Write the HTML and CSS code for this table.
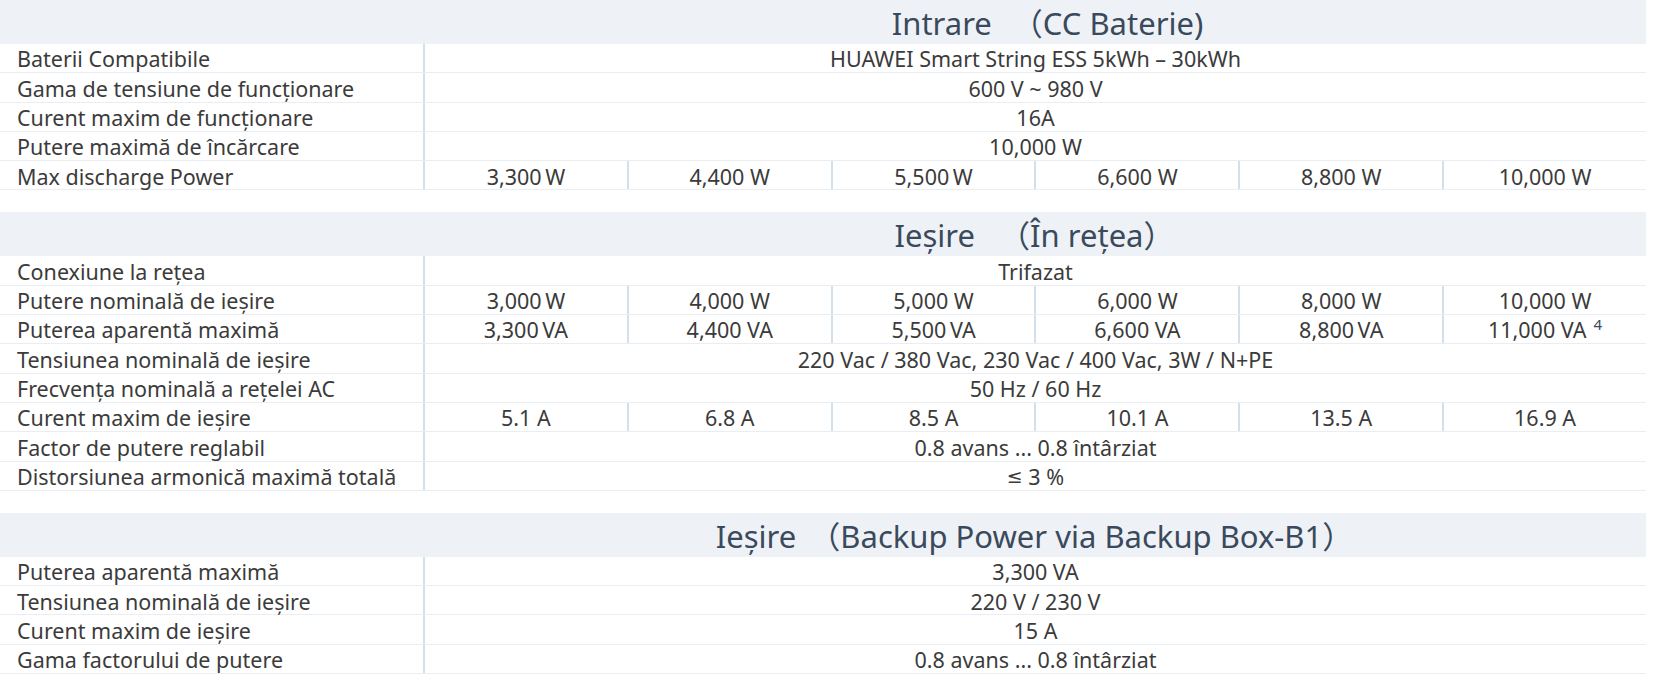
FILE: index.html
```html
<!DOCTYPE html>
<html lang="ro">
<head>
<meta charset="utf-8">
<title>Specificații</title>
<link rel="stylesheet" href="styles.css">
</head>
<body>
<div class="spec">
  <section class="group">
    <div class="head"><div></div><h2 class="title t1">Intrare<span class="cjk open o1">（</span>CC Baterie)</h2></div>
    <div class="row"><div class="lbl">Baterii Compatibile</div><div class="val all">HUAWEI Smart String ESS 5kWh – 30kWh</div></div>
    <div class="row"><div class="lbl">Gama de tensiune de funcționare</div><div class="val all">600 V ~ 980 V</div></div>
    <div class="row"><div class="lbl">Curent maxim de funcționare</div><div class="val all">16A</div></div>
    <div class="row"><div class="lbl">Putere maximă de încărcare</div><div class="val all">10,000 W</div></div>
    <div class="row"><div class="lbl">Max discharge Power</div><div class="val">3,300&#8201;W</div><div class="val">4,400 W</div><div class="val">5,500&#8201;W</div><div class="val">6,600 W</div><div class="val">8,800 W</div><div class="val">10,000 W</div></div>
  </section>
  <div class="gap"></div>
  <section class="group">
    <div class="head"><div></div><h2 class="title">Ieșire <span class="cjk open o2">（</span>În rețea<span class="cjk">）</span></h2></div>
    <div class="row"><div class="lbl">Conexiune la rețea</div><div class="val all">Trifazat</div></div>
    <div class="row"><div class="lbl">Putere nominală de ieșire</div><div class="val">3,000&#8201;W</div><div class="val">4,000 W</div><div class="val">5,000 W</div><div class="val">6,000 W</div><div class="val">8,000 W</div><div class="val">10,000 W</div></div>
    <div class="row"><div class="lbl">Puterea aparentă maximă</div><div class="val">3,300&#8201;VA</div><div class="val">4,400 VA</div><div class="val">5,500&#8201;VA</div><div class="val">6,600 VA</div><div class="val">8,800&#8201;VA</div><div class="val">11,000 VA <sup class="note">4</sup></div></div>
    <div class="row"><div class="lbl">Tensiunea nominală de ieșire</div><div class="val all">220 Vac / 380 Vac, 230 Vac / 400 Vac, 3W / N+PE</div></div>
    <div class="row"><div class="lbl">Frecvența nominală a rețelei AC</div><div class="val all">50 Hz / 60 Hz</div></div>
    <div class="row"><div class="lbl">Curent maxim de ieșire</div><div class="val">5.1 A</div><div class="val">6.8 A</div><div class="val">8.5 A</div><div class="val">10.1 A</div><div class="val">13.5 A</div><div class="val">16.9 A</div></div>
    <div class="row"><div class="lbl">Factor de putere reglabil</div><div class="val all">0.8 avans ... 0.8 întârziat</div></div>
    <div class="row"><div class="lbl">Distorsiunea armonică maximă totală</div><div class="val all"><span class="sym">≤</span>&nbsp;3 %</div></div>
  </section>
  <div class="gap"></div>
  <section class="group">
    <div class="head"><div></div><h2 class="title">Ieșire <span class="cjk open o3">（</span>Backup Power via Backup Box-B1<span class="cjk">）</span></h2></div>
    <div class="row"><div class="lbl">Puterea aparentă maximă</div><div class="val all">3,300 VA</div></div>
    <div class="row"><div class="lbl">Tensiunea nominală de ieșire</div><div class="val all">220 V / 230 V</div></div>
    <div class="row"><div class="lbl">Curent maxim de ieșire</div><div class="val all">15 A</div></div>
    <div class="row"><div class="lbl">Gama factorului de putere</div><div class="val all">0.8 avans ... 0.8 întârziat</div></div>
  </section>
  <div class="gap end"></div>
</div>
</body>
</html>
```

FILE: styles.css
```css
html, body {
  margin: 0;
  padding: 0;
  background: #ffffff;
}

.spec {
  width: 1646px;
  font-family: "Noto Sans", "Noto Sans CJK SC", sans-serif;
  color: #3b3b3b;
  font-size: 21.5px;
}

.head,
.row {
  display: grid;
  grid-template-columns: 423px repeat(6, 1fr);
}

.head {
  height: 44px;
  background: #eef2f7;
  align-items: center;
}

.title {
  grid-column: 2 / span 6;
  margin: 0;
  text-align: center;
  font-weight: 400;
  font-size: 31px;
  line-height: 44px;
  color: #3a4a5c;
  white-space: nowrap;
}

.title.t1 {
  padding-left: 26px;
}

.cjk {
  font-family: "Noto Sans CJK SC", sans-serif;
}

.open.o1 {
  margin-left: 20px;
}

.open.o2 {
  margin-left: 16px;
}

.open.o3 {
  margin-left: 5px;
}

.row {
  box-sizing: border-box;
  height: 29.3px;
  border-bottom: 1px solid #e8eef4;
  align-items: stretch;
}

.lbl,
.val {
  display: flex;
  align-items: center;
  line-height: 1;
  white-space: nowrap;
  padding-top: 2px;
}

.lbl {
  padding-left: 17px;
}

.val {
  justify-content: center;
  border-left: 2px solid #d2e0ec;
}

.val.all {
  grid-column: 2 / span 6;
}

.sym {
  font-family: "DejaVu Sans", sans-serif;
  font-size: 19px;
}

.note {
  font-size: 15px;
  line-height: 1;
  color: #3a4a5c;
  margin-left: 7px;
  position: relative;
  top: -6px;
}

.gap {
  height: 22px;
}

.gap.end {
  border-bottom: 1px solid #e8eef4;
}
```
